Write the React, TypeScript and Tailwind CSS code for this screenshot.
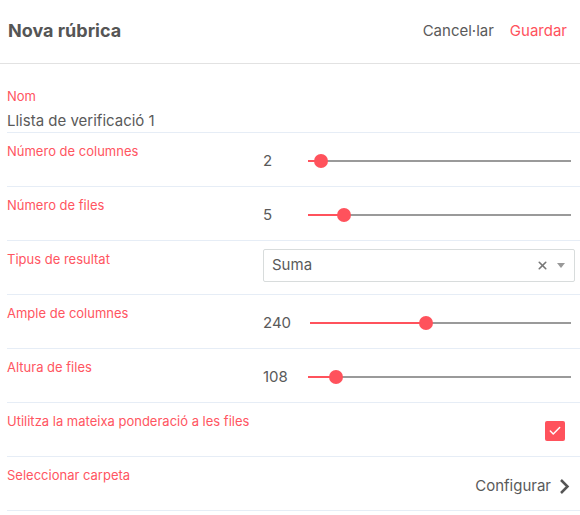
import { Check, X } from 'lucide-react';

type SliderRowProps = {
  label: string;
  value: number;
  percent: number;
  numClass?: string;
};

const Row = ({ label, children }: { label: string; children?: React.ReactNode }) => (
  <div className="flex h-[54px] border-b border-[#e6edf6] ml-[7px]">
    <div className="flex-1 pt-[10px] text-[13px] leading-4 text-[#ff5561]">{label}</div>
    {children}
  </div>
);

const SliderRow = ({ label, value, percent, numClass = 'w-[45px]' }: SliderRowProps) => (
  <Row label={label}>
    <div className="flex items-center w-[308px] mr-[9px] pt-[2px]">
      <span className={`${numClass} shrink-0 text-[15px] text-[#5a5a5a] pt-[2px]`}>{value}</span>
      <div className="relative flex-1 h-[2px] bg-[#9a9a9a]">
        <div className="absolute left-0 top-0 h-[2px] bg-[#ff525c]" style={{ width: `${percent}%` }} />
        <div
          className="absolute top-1/2 w-[14px] h-[14px] -translate-x-1/2 -translate-y-1/2 rounded-full bg-[#ff525c]"
          style={{ left: `${percent}%` }}
        />
      </div>
    </div>
  </Row>
);

export default function App() {
  return (
    <div className="w-[580px] h-[515px] bg-white font-['Inter',sans-serif] overflow-hidden">
      <div className="flex items-center justify-between h-16 border-b border-[#e2e2e2] pl-2 pr-[13px]">
        <h1 className="text-[18px] font-bold text-[#555] pb-[2px]">Nova rúbrica</h1>
        <div className="flex items-center gap-[16px] text-[15px]">
          <span className="text-[#5a5a5a]">Cancel·lar</span>
          <span className="text-[#ff525c]">Guardar</span>
        </div>
      </div>

      <div className="ml-[7px] h-[69px] border-b border-[#e6edf6] pt-[24px]">
        <div className="text-[13px] leading-4 text-[#ff5561]">Nom</div>
        <div className="mt-[7px] text-[15px] leading-5 text-[#5a5a5a]">Llista de verificació 1</div>
      </div>

      <SliderRow label="Número de columnes" value={2} percent={5} />
      <SliderRow label="Número de files" value={5} percent={13.7} />

      <Row label="Tipus de resultat">
        <div className="self-center mb-[4px] mr-[5px] w-[312px] h-[33px] border border-[#d8dcdc] rounded-[2px] flex items-center pl-[8px] pr-[9px]">
          <span className="flex-1 text-[15px] text-[#5a5a5a]">Suma</span>
          <X size={13} strokeWidth={3} className="text-[#777] mr-[8px]" />
          <svg width="8" height="6" viewBox="0 0 8 6">
            <path d="M0 0 L8 0 L4 5 Z" fill="#999" />
          </svg>
        </div>
      </Row>

      <SliderRow label="Ample de columnes" value={240} percent={44.5} numClass="w-[47px]" />
      <SliderRow label="Altura de files" value={108} percent={10.6} />

      <Row label="Utilitza la mateixa ponderació a les files">
        <div className="self-center mr-[15px] mt-[2px] w-[20px] h-[20px] rounded-[2px] bg-[#ff525c] flex items-center justify-center">
          <Check size={14} strokeWidth={2.5} className="text-white" />
        </div>
      </Row>

      <Row label="Seleccionar carpeta">
        <div className="self-center flex items-center mr-[10px] mt-[5px] text-[15px] text-[#5a5a5a]">
          <span>Configurar</span>
          <svg width="11" height="17" viewBox="0 0 11 17" className="ml-[8px]">
            <polyline points="2,2 8.5,8.5 2,15" fill="none" stroke="#555" strokeWidth="2.5" />
          </svg>
        </div>
      </Row>
    </div>
  );
}
